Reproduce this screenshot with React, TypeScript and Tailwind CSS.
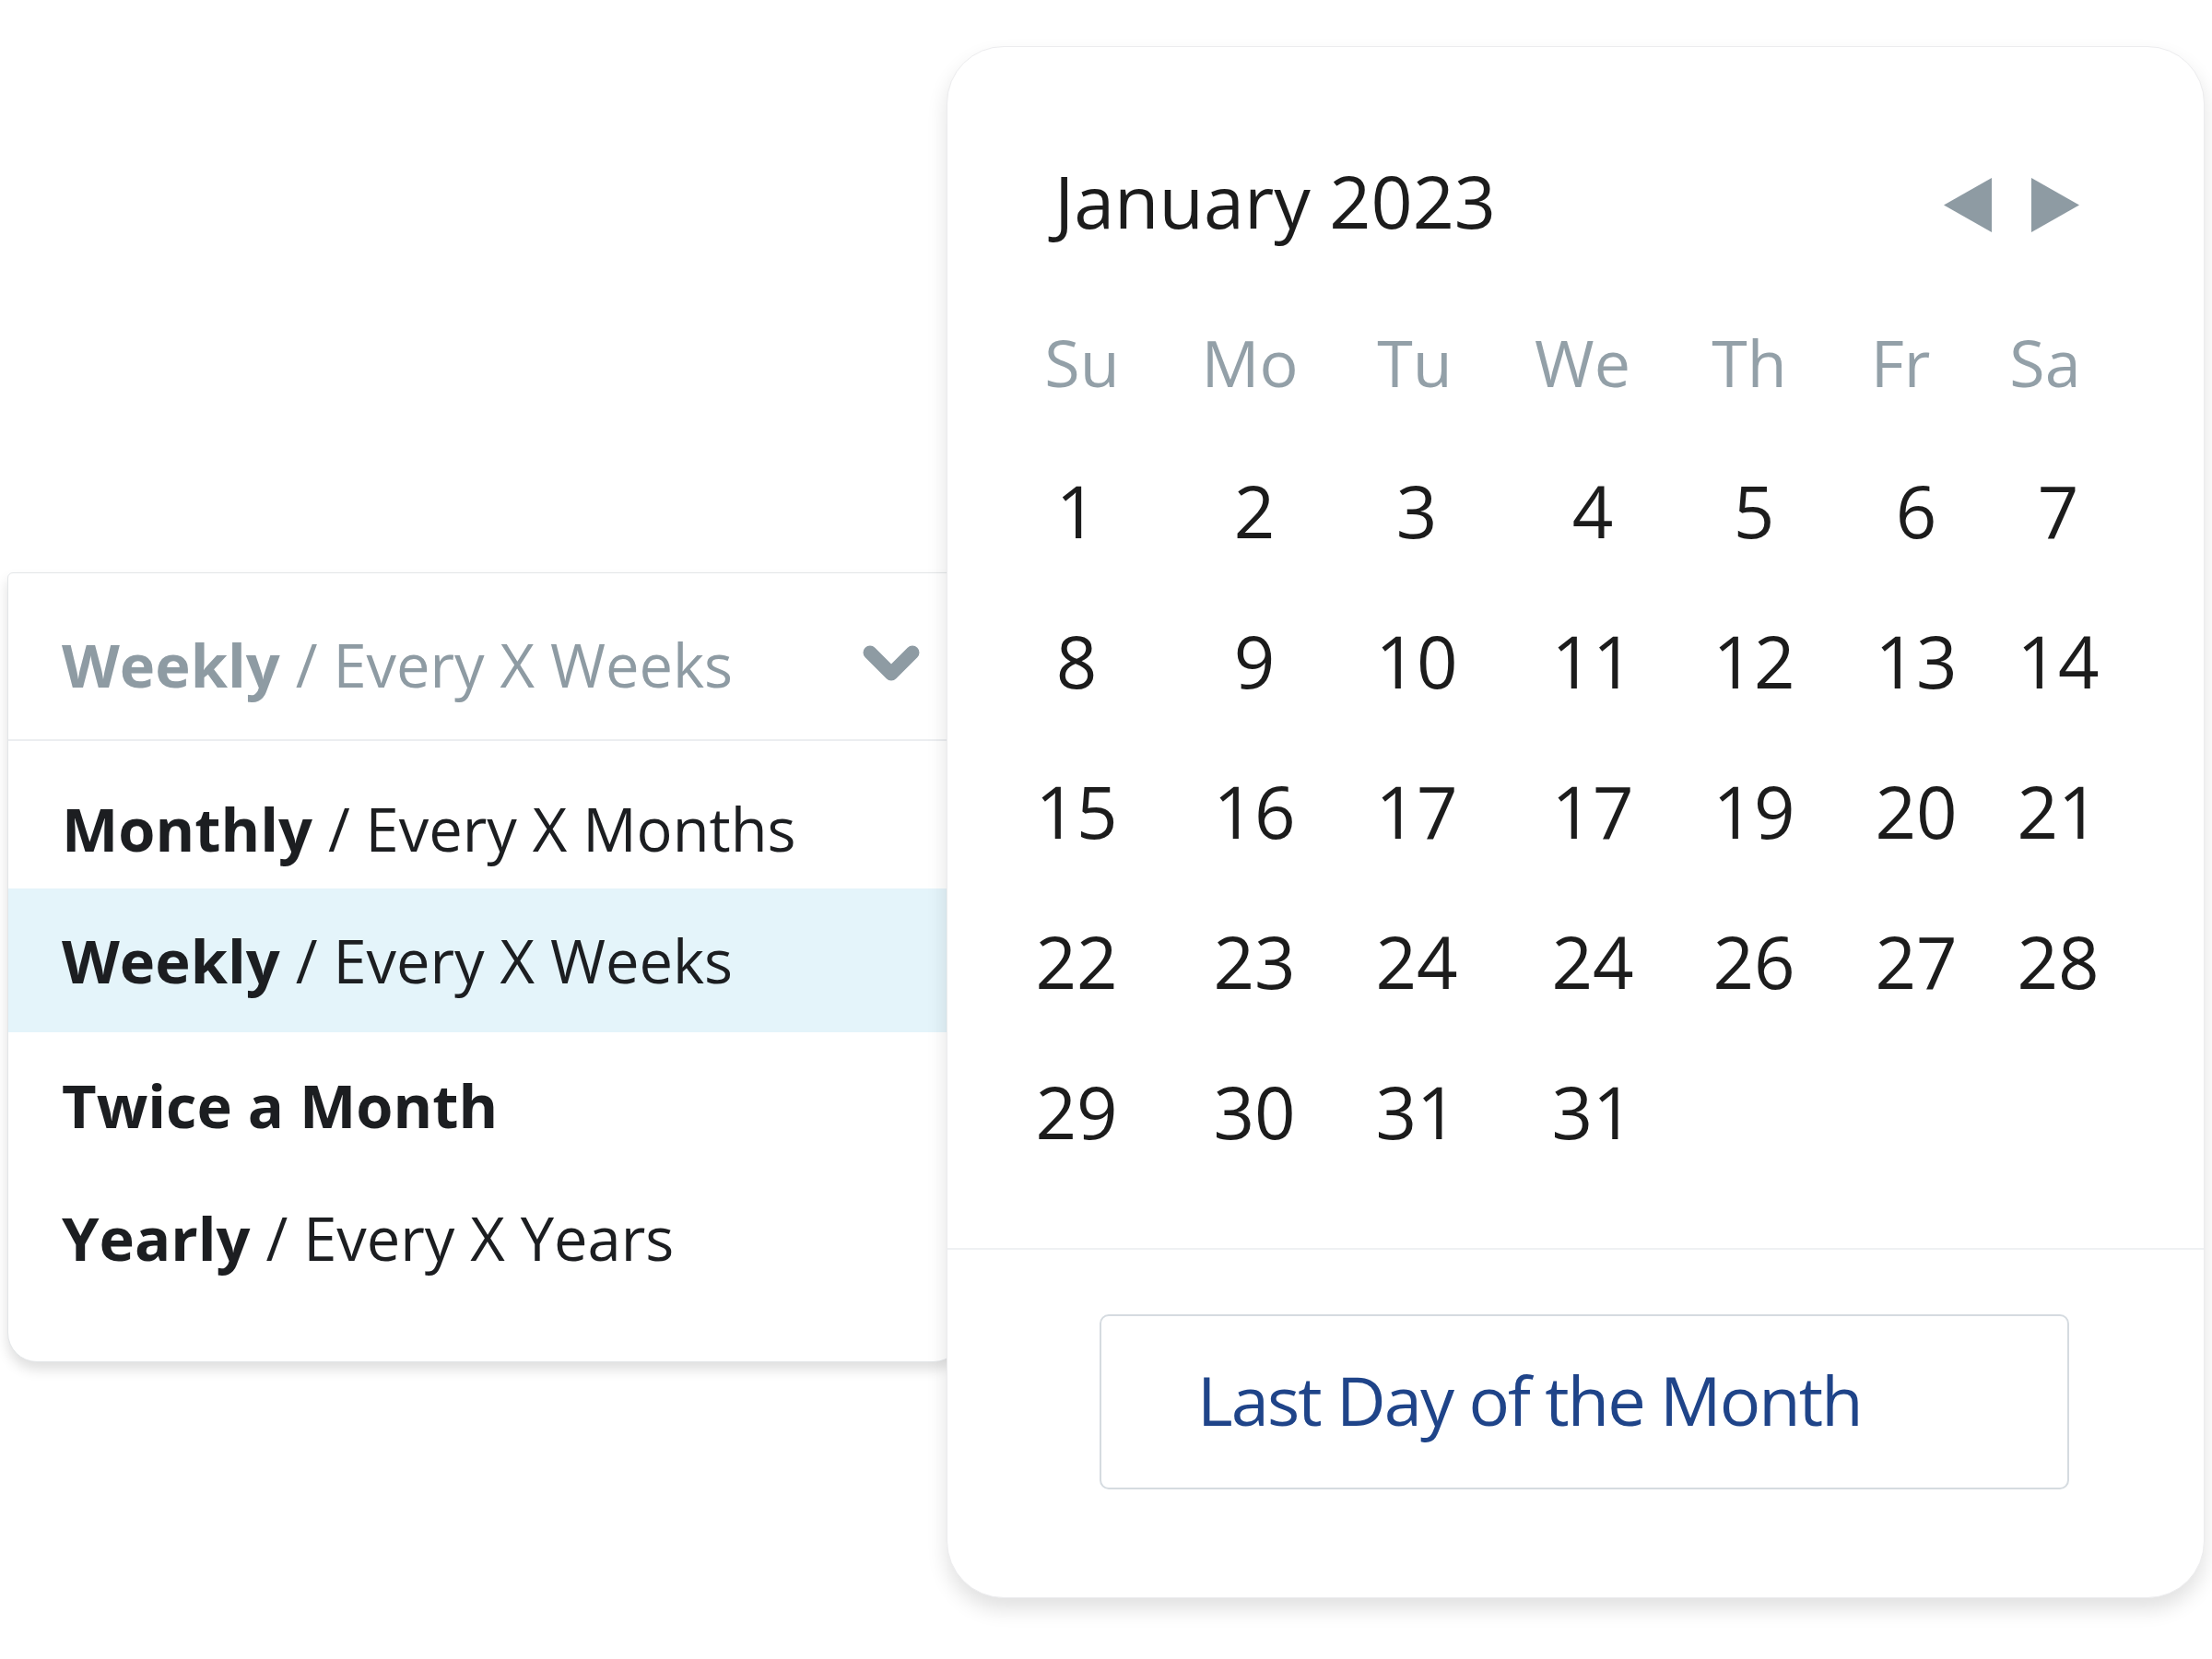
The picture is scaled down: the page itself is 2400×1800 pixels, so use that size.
import React from "react";

const weeks: number[][] = [
  [1, 2, 3, 4, 5, 6, 7],
  [8, 9, 10, 11, 12, 13, 14],
  [15, 16, 17, 17, 19, 20, 21],
  [22, 23, 24, 24, 26, 27, 28],
  [29, 30, 31, 31],
];

const dayNames = ["Su", "Mo", "Tu", "We", "Th", "Fr", "Sa"];

function Chevron() {
  return (
    <svg width="62" height="42" viewBox="0 0 62 42" fill="none">
      <polyline points="8,8 31,31 54,8" stroke="#8e9ba3" strokeWidth="15" strokeLinecap="round" strokeLinejoin="round" />
    </svg>
  );
}

function Dropdown() {
  const rows = [
    { bold: "Monthly", rest: " / Every X Months", h: "h-[129px]", active: false },
    { bold: "Weekly", rest: " / Every X Weeks", h: "h-[156px]", active: true },
    { bold: "Twice a Month", rest: "", h: "h-[159px]", active: false },
    { bold: "Yearly", rest: " / Every X Years", h: "h-[128px]", active: false },
  ];
  return (
    <div className="mt-[621px] ml-[8px] w-[1037px] shrink-0 bg-white border border-[#e3e6e8] rounded-t-[6px] rounded-b-[32px] shadow-[0_8px_14px_rgba(0,0,0,0.13)]">
      <div className="h-[182px] pt-[18px] pl-[58px] pr-[46px] flex items-center justify-between border-b-2 border-[#eceef0] text-[65px] leading-none text-[#8e9ba3]">
        <span><span className="font-bold">Weekly</span> / Every X Weeks</span>
        <Chevron />
      </div>
      <div className="pt-[31px] pb-[70px]">
        {rows.map((r) => (
          <div key={r.bold} className={`${r.h} flex items-center pl-[58px] text-[65px] leading-none text-[#1c1e21] ${r.active ? "bg-[#e4f4fa]" : ""}`}>
            <span><span className="font-bold">{r.bold}</span>{r.rest}</span>
          </div>
        ))}
      </div>
    </div>
  );
}

function Calendar() {
  return (
    <div className="relative z-10 ml-[-18px] mt-[50px] w-[1365px] shrink-0 bg-white border border-[#ececee] rounded-[62px] shadow-[0_12px_22px_rgba(0,0,0,0.12)]">
      <div className="pt-[116px] pl-[116px] pr-[135px] h-[216px] flex items-center justify-between">
        <div className="text-[79px] leading-none text-[#1c1c1c]">January 2023</div>
        <div className="mt-[10px] flex items-center gap-[43px]">
          <svg width="52" height="59" viewBox="0 0 52 59"><polygon points="52,0 52,59 0,29.5" fill="#8e9ba3" /></svg>
          <svg width="52" height="59" viewBox="0 0 52 59"><polygon points="0,0 0,59 52,29.5" fill="#8e9ba3" /></svg>
        </div>
      </div>
      <div className="mt-[76px] pl-[56px] h-[100px] grid grid-cols-[180px_184px_174px_190px_172px_156px_158px] items-center text-[70px] leading-none text-[#93a0a8]">
        {dayNames.map((d) => (
          <div key={d} className="text-center">{d}</div>
        ))}
      </div>
      <div className="mt-[29px] pl-[40px]">
        {weeks.map((w, i) => (
          <div key={i} className="h-[163px] grid grid-cols-[200px_186px_166px_216px_134px_218px_90px] items-center text-[78px] leading-none text-[#1c1c1c]">
            {w.map((n, j) => (
              <div key={j} className="text-center">{n}</div>
            ))}
          </div>
        ))}
      </div>
      <div className="mt-[67px] border-t-2 border-[#eff1f3] pt-[70px] pb-[117px] pl-[165px]">
        <div className="w-[1052px] h-[190px] border-2 border-[#d5dbe0] rounded-[10px] flex items-center pl-[104px] pb-[4px]">
          <span className="text-[74px] leading-none tracking-[-0.026em] text-[#1f4489]">Last Day of the Month</span>
        </div>
      </div>
    </div>
  );
}

export default function App() {
  return (
    <div className="w-[2400px] h-[1800px] bg-white flex items-start font-['Open_Sans',sans-serif]">
      <Dropdown />
      <Calendar />
    </div>
  );
}
